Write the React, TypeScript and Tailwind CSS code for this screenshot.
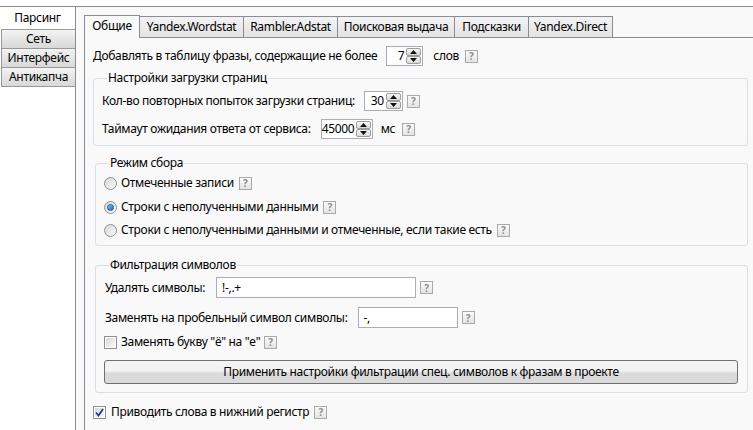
import React from "react";

function Help() {
  return (
    <span className="inline-flex h-[13px] w-[13px] shrink-0 items-center justify-center border border-[#a9a9a9] bg-linear-to-b from-[#fbfbfb] to-[#e4e4e4] text-[10px] font-bold leading-none tracking-normal text-[#8d8d8d]">
      ?
    </span>
  );
}

function Arrow({ up }: { up?: boolean }) {
  return (
    <span className="flex h-[9px] w-[15px] items-center justify-center rounded-[2px] border border-[#9c9c9c] bg-linear-to-b from-[#f6f6f6] to-[#d9d9d9]">
      <svg width="7" height="4" viewBox="0 0 7 4">
        {up ? <path d="M0 4 L3.5 0 L7 4 Z" fill="#111" /> : <path d="M0 0 L3.5 4 L7 0 Z" fill="#111" />}
      </svg>
    </span>
  );
}

function Spin({ value, width }: { value: string; width: string }) {
  return (
    <div className={`flex h-[20px] shrink-0 border border-[#abadb3] bg-white ${width}`}>
      <div className="flex-1 pr-[2px] text-right leading-[18px]">{value}</div>
      <div className="flex flex-col justify-between py-px pr-px">
        <Arrow up />
        <Arrow />
      </div>
    </div>
  );
}

function Radio({ checked }: { checked?: boolean }) {
  return (
    <span className="flex h-[13px] w-[13px] shrink-0 items-center justify-center rounded-full border border-[#8f9090] bg-linear-to-br from-[#d6d6d6] to-[#fbfbfb]">
      {checked && <span className="h-[7px] w-[7px] rounded-full border border-[#1d5a8e] bg-linear-to-br from-[#7cc3f2] to-[#1f73b8]" />}
    </span>
  );
}

function Check({ checked }: { checked?: boolean }) {
  return (
    <span className="flex h-[13px] w-[13px] shrink-0 items-center justify-center border border-[#8f8f8f] bg-white p-[1px]">
      <span className="flex h-full w-full items-center justify-center bg-linear-to-br from-[#d9d9d9] to-[#f8f8f8]">
        {checked && (
          <svg width="9" height="9" viewBox="0 0 9 9">
            <path d="M1 4.5 L3.5 7.5 L8 1" stroke="#26388a" strokeWidth="1.8" fill="none" />
          </svg>
        )}
      </span>
    </span>
  );
}

function Group({ title, className, children }: { title: string; className: string; children: React.ReactNode }) {
  return (
    <fieldset className={`mr-[5px] rounded-[3px] border border-[#d5dfe5] ${className}`}>
      <legend className="ml-[5px] px-[1px] leading-[16px]">{title}</legend>
      {children}
    </fieldset>
  );
}

const tabs = ["Yandex.Wordstat", "Rambler.Adstat", "Поисковая выдача", "Подсказки", "Yandex.Direct"];
const tabWidths = ["w-[105px]", "w-[95px]", "w-[118px]", "w-[75px]", "w-[85px]"];

export default function App() {
  return (
    <div className="h-[430px] w-[753px] overflow-hidden bg-white pt-[6px] font-['Noto_Sans',sans-serif] text-[12px] tracking-[-0.32px] text-black">
      <div className="flex h-full border-t border-[#8c8c8c]">
        <div className="flex w-[75px] shrink-0 flex-col">
          <div className="flex h-[22px] items-center justify-center">Парсинг</div>
          {["Сеть", "Интерфейс", "Антикапча"].map((t, i) => (
            <div
              key={t}
              className={`ml-px flex h-[20px] w-[75px] items-center justify-center border border-[#999] bg-linear-to-b from-[#f3f3f3] to-[#d8d8d8] ${i > 0 ? "-mt-px" : ""}`}
            >
              {t}
            </div>
          ))}
        </div>

        <div className="relative flex flex-1 flex-col border-l border-[#8c8c8c] bg-[#f9f9f9] pl-[8px] pt-[8px]">
          <div className="flex h-[22px] items-end">
            <div className="relative z-10 -mb-px flex h-[23px] w-[56px] items-center justify-center border border-b-0 border-[#898c95] bg-[#f9f9f9] pb-[2px]">
              Общие
            </div>
            {tabs.map((t, i) => (
              <div
                key={t}
                className={`-ml-px flex h-[21px] items-center justify-center border border-b-0 border-[#898c95] bg-linear-to-b from-[#f3f3f3] to-[#e3e3e3] ${tabWidths[i]}`}
              >
                {t}
              </div>
            ))}
          </div>

          <div className="flex flex-1 flex-col border-l border-t border-[#898c95] pl-[8px] pt-[8px]">
            <div className="flex h-[20px] items-center">
              <span>Добавлять в таблицу фразы, содержащие не более</span>
              <span className="ml-[9px]">
                <Spin value="7" width="w-[37px]" />
              </span>
              <span className="ml-[10px]">слов</span>
              <span className="ml-[6px]">
                <Help />
              </span>
            </div>

            <Group title="Настройки загрузки страниц" className="mt-[4px] pb-[6px] pl-[8px]">
              <div className="mt-[5px] flex h-[20px] items-center">
                <span>Кол-во повторных попыток загрузки страниц:</span>
                <span className="ml-[9px]">
                  <Spin value="30" width="w-[39px]" />
                </span>
                <span className="ml-[4px]">
                  <Help />
                </span>
              </div>
              <div className="mt-[8px] flex h-[20px] items-center">
                <span>Таймаут ожидания ответа от сервиса:</span>
                <span className="ml-[10px]">
                  <Spin value="45000" width="w-[52px]" />
                </span>
                <span className="ml-[8px]">мс</span>
                <span className="ml-[7px]">
                  <Help />
                </span>
              </div>
            </Group>

            <Group title="Режим сбора" className="ml-[2px] mt-[9px] pb-[7px] pl-[8px]">
              <div className="mt-[4px] flex h-[16px] items-center">
                <Radio />
                <span className="ml-[4px]">Отмеченные записи</span>
                <span className="ml-[5px]">
                  <Help />
                </span>
              </div>
              <div className="mt-[8px] flex h-[16px] items-center">
                <Radio checked />
                <span className="ml-[4px]">Строки с неполученными данными</span>
                <span className="ml-[5px]">
                  <Help />
                </span>
              </div>
              <div className="mt-[7px] flex h-[16px] items-center">
                <Radio />
                <span className="ml-[4px]">Строки с неполученными данными и отмеченные, если такие есть</span>
                <span className="ml-[5px]">
                  <Help />
                </span>
              </div>
            </Group>

            <Group title="Фильтрация символов" className="ml-[2px] mt-[11px] pb-[8px] pl-[8px] pr-[9px]">
              <div className="mt-[4px] flex h-[21px] items-center">
                <span className="ml-px">Удалять символы:</span>
                <div className="ml-[11px] flex h-[21px] w-[200px] items-center border border-[#abadb3] bg-white pl-[5px]">!-,.+</div>
                <span className="ml-[4px]">
                  <Help />
                </span>
              </div>
              <div className="mt-[9px] flex h-[21px] items-center">
                <span className="ml-px">Заменять на пробельный символ символы:</span>
                <div className="ml-[10px] flex h-[21px] w-[100px] items-center border border-[#abadb3] bg-white pl-[5px]">-,</div>
                <span className="ml-[4px]">
                  <Help />
                </span>
              </div>
              <div className="mt-[6px] flex h-[16px] items-center">
                <Check />
                <span className="ml-[4px]">Заменять букву "ё" на "е"</span>
                <span className="ml-[4px]">
                  <Help />
                </span>
              </div>
              <button className="mt-[10px] flex h-[24px] w-full items-center justify-center rounded-[3px] border border-[#707070] bg-linear-to-b from-[#f3f3f3] from-45% to-[#dadada] to-55%">
                Применить настройки фильтрации спец. символов к фразам в проекте
              </button>
            </Group>

            <div className="mt-[11px] flex h-[16px] items-center">
              <Check checked />
              <span className="ml-[5px]">Приводить слова в нижний регистр</span>
              <span className="ml-[5px]">
                <Help />
              </span>
            </div>
          </div>
        </div>
      </div>
    </div>
  );
}
